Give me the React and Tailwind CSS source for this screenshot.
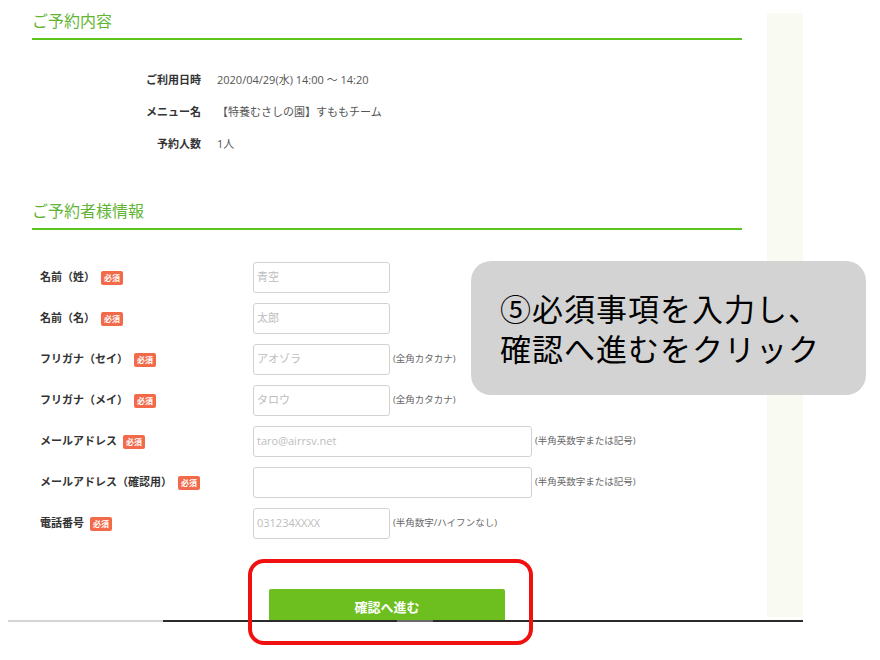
import React from "react";

const FONT = { fontFamily: '"Open Sans", "Noto Sans CJK JP", sans-serif' };

function Badge() {
  return (
    <span className="ml-[6px] inline-flex h-[14px] w-[22px] items-center justify-center rounded-[2px] bg-[#f26a4a] text-[8px] font-bold leading-none text-white">
      必須
    </span>
  );
}

function FormRow({ label, placeholder, wide, note }) {
  return (
    <div className="flex h-[31px] items-center">
      <div className="flex w-[221px] shrink-0 items-center pl-[8px]">
        <span className="text-[11px] font-bold text-[#333]">{label}</span>
        <Badge />
      </div>
      <div
        className={`flex h-[31px] shrink-0 items-center rounded-[3px] border border-[#d2d2d2] pl-[3px] text-[11px] text-[#bdbdbd] ${
          wide ? "w-[279px]" : "w-[137px]"
        }`}
      >
        {placeholder}
      </div>
      {note && (
        <span className="ml-[3px] whitespace-nowrap text-[9.5px] text-[#666]">{note}</span>
      )}
    </div>
  );
}

function Heading({ children }) {
  return (
    <div className="border-b-2 border-[#5cc41c] pb-[5px]">
      <h2 className="text-[16px] leading-[24px] text-[#62b534]">{children}</h2>
    </div>
  );
}

export default function App() {
  return (
    <div className="relative h-[660px] w-[880px] overflow-hidden bg-white" style={FONT}>
      <div className="ml-[8px] flex h-[620px] w-[795px] overflow-hidden">
        <div className="w-[734px] shrink-0 pl-[24px] pt-[9px]">
          <Heading>ご予約内容</Heading>
          <div className="mt-[24px] grid grid-cols-[169px_1fr] gap-x-[16px] text-[11px] leading-[32px]">
            <div className="text-right font-bold text-[#333]">ご利用日時</div>
            <div className="text-[#555]">2020/04/29(水) 14:00 ～ 14:20</div>
            <div className="text-right font-bold text-[#333]">メニュー名</div>
            <div className="text-[#555]">【特養むさしの園】すももチーム</div>
            <div className="text-right font-bold text-[#333]">予約人数</div>
            <div className="text-[#555]">1人</div>
          </div>
          <div className="mt-[39px]">
            <Heading>ご予約者様情報</Heading>
          </div>
          <div className="mt-[32px] flex flex-col gap-[10px]">
            <FormRow label="名前（姓）" placeholder="青空" />
            <FormRow label="名前（名）" placeholder="太郎" />
            <FormRow label="フリガナ（セイ）" placeholder="アオゾラ" note="(全角カタカナ)" />
            <FormRow label="フリガナ（メイ）" placeholder="タロウ" note="(全角カタカナ)" />
            <FormRow label="メールアドレス" placeholder="taro@airrsv.net" wide note="(半角英数字または記号)" />
            <FormRow label="メールアドレス（確認用）" placeholder="" wide note="(半角英数字または記号)" />
            <FormRow label="電話番号" placeholder="031234XXXX" note="(半角数字/ハイフンなし)" />
          </div>
          <div className="ml-[237px] mt-[50px] flex h-[38px] w-[236px] items-center justify-center rounded-[2px] bg-[#6cbf1f] text-[13px] font-bold text-white">
            確認へ進む
          </div>
        </div>
        <div className="ml-[25px] mt-[13px] h-[604px] w-[36px] bg-[#f9fbf3]" />
      </div>
      <div className="ml-[8px] flex h-[2px] w-[795px]">
        <div className="h-full w-[155px] bg-[#d4d4d4]" />
        <div className="h-full w-[234px] bg-[#2b2b2b]" />
        <div className="h-full w-[36px] bg-[#6a6a6a]" />
        <div className="h-full flex-1 bg-[#2b2b2b]" />
      </div>

      <div className="absolute left-[471px] top-[261px] flex h-[134px] w-[395px] flex-col justify-center rounded-[20px] bg-[#d3d3d3] pl-[29px]">
        <div
          className="text-[31px] font-normal leading-[40px] tracking-[1px] text-black"
          style={{ fontFamily: '"Noto Sans CJK JP", sans-serif' }}
        >
          <div className="whitespace-nowrap">⑤必須事項を入力し、</div>
          <div className="whitespace-nowrap">確認へ進むをクリック</div>
        </div>
      </div>

      <div className="absolute left-[248px] top-[559px] h-[86px] w-[285px] rounded-[16px] border-4 border-[#f01010]" />
    </div>
  );
}
